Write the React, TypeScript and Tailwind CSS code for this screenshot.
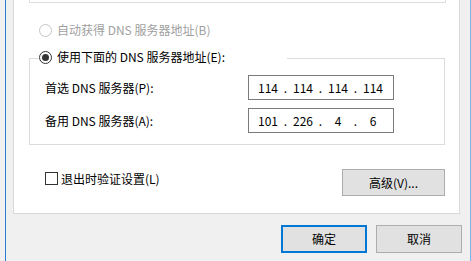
import {Fragment} from 'react';

function Radio({checked, disabled}: {checked?: boolean; disabled?: boolean}) {
  return (
    <span
      className={`flex h-[13px] w-[13px] shrink-0 items-center justify-center rounded-full border bg-white ${
        disabled ? 'border-[#c4c4c4]' : 'border-[#333333]'
      }`}
    >
      {checked ? <span className="h-[7px] w-[7px] rounded-full bg-[#333333]" /> : null}
    </span>
  );
}

function IpBox({parts}: {parts: string[]}) {
  return (
    <div className="flex h-[25px] w-[146px] items-center border border-[#7a7a7a] bg-white pl-[5px] text-[12px] text-black">
      {parts.map((part, i) => (
        <Fragment key={i}>
          {i > 0 ? <span className="w-[7px] text-center">.</span> : null}
          <span className="w-[28px] text-center">{part}</span>
        </Fragment>
      ))}
    </div>
  );
}

export default function App() {
  return (
    <div className="flex h-[261px] w-[471px] overflow-hidden bg-[#f0f0f0] font-['Noto_Sans_CJK_SC',sans-serif] text-[12px] leading-none text-black">
      <div className="w-[5px] shrink-0" />
      <div className="w-px shrink-0 bg-[#2f7dd1]" />

      <div className="flex w-[464px] shrink-0 flex-col">
        <div className="ml-[7px] mr-[10px] h-[214px] border-x border-b border-[#d9d9d9] bg-white">
          {/* bottom of the IP address group above */}
          <div className="ml-[15px] h-[3px] w-[417px] border-x border-b border-[#dcdcdc]" />

          <div className="ml-[25px] mt-[17px] flex h-[20px] items-center gap-[5px] text-[#a0a0a0]">
            <Radio disabled />
            <span>自动获得 DNS 服务器地址(B)</span>
          </div>

          <div className="relative ml-[15px] mt-[18px] h-[87px] w-[416px] border border-[#dcdcdc] pl-[15px] pt-[16px]">
            <div className="absolute left-[8px] top-[-12px] flex h-[20px] w-[249px] items-center gap-[5px] bg-white pl-px">
              <Radio checked />
              <span>使用下面的 DNS 服务器地址(E):</span>
            </div>

            <div className="flex flex-col gap-[8px]">
              <div className="flex items-center">
                <span className="w-[203px]">首选 DNS 服务器(P):</span>
                <IpBox parts={['114', '114', '114', '114']} />
              </div>
              <div className="flex items-center">
                <span className="w-[203px]">备用 DNS 服务器(A):</span>
                <IpBox parts={['101', '226', '4', '6']} />
              </div>
            </div>
          </div>

          <div className="mt-[24px] flex items-start justify-between">
            <div className="ml-[31px] mt-[3px] flex items-center gap-[3px]">
              <span className="h-[13px] w-[13px] border border-[#333333] bg-white" />
              <span>退出时验证设置(L)</span>
            </div>
            <button
              className="mr-[14px] flex h-[27px] w-[103px] items-center justify-center border border-[#adadad] bg-[#e1e1e1]"
              type="button"
            >
              高级(V)...
            </button>
          </div>
        </div>

        <div className="mr-[8px] mt-[11px] flex justify-end gap-[9px]">
          <button
            className="flex h-[28px] w-[86px] items-center justify-center border-2 border-[#0078d7] bg-[#e1e1e1]"
            type="button"
          >
            确定
          </button>
          <button
            className="flex h-[28px] w-[86px] items-center justify-center border border-[#adadad] bg-[#e1e1e1]"
            type="button"
          >
            取消
          </button>
        </div>
      </div>

      <div className="w-px shrink-0 bg-[#7ab6ea]" />
    </div>
  );
}
